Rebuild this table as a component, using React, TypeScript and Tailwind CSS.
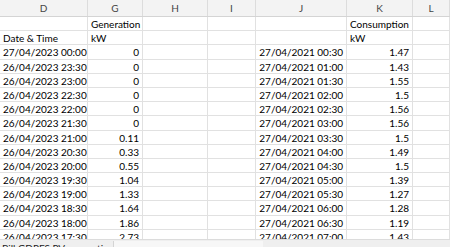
import React from "react";

const cols = ["D", "G", "H", "I", "J", "K", "L"];

const generation: [string, string][] = [
  ["27/04/2023 00:00", "0"],
  ["26/04/2023 23:30", "0"],
  ["26/04/2023 23:00", "0"],
  ["26/04/2023 22:30", "0"],
  ["26/04/2023 22:00", "0"],
  ["26/04/2023 21:30", "0"],
  ["26/04/2023 21:00", "0.11"],
  ["26/04/2023 20:30", "0.33"],
  ["26/04/2023 20:00", "0.55"],
  ["26/04/2023 19:30", "1.04"],
  ["26/04/2023 19:00", "1.33"],
  ["26/04/2023 18:30", "1.64"],
  ["26/04/2023 18:00", "1.86"],
  ["26/04/2023 17:30", "2.73"],
];

const consumption: [string, string][] = [
  ["27/04/2021 00:30", "1.47"],
  ["27/04/2021 01:00", "1.43"],
  ["27/04/2021 01:30", "1.55"],
  ["27/04/2021 02:00", "1.5"],
  ["27/04/2021 02:30", "1.56"],
  ["27/04/2021 03:00", "1.56"],
  ["27/04/2021 03:30", "1.5"],
  ["27/04/2021 04:00", "1.49"],
  ["27/04/2021 04:30", "1.5"],
  ["27/04/2021 05:00", "1.39"],
  ["27/04/2021 05:30", "1.27"],
  ["27/04/2021 06:00", "1.28"],
  ["27/04/2021 06:30", "1.19"],
  ["27/04/2021 07:00", "1.43"],
];

// D, G, H, I, J, K, L
type Row = [string, string, string, string, string, string, string];

const rows: Row[] = [
  ["", "Generation", "", "", "", "Consumption", ""],
  ["Date & Time", "kW", "", "", "", "kW", ""],
  ...generation.map(
    (g, i) => [g[0], g[1], "", "", consumption[i][0], consumption[i][1], ""] as Row
  ),
];

// which cells are right aligned (numbers / real dates)
const alignRight = (r: number, c: number) => r >= 2 && (c === 1 || c === 4 || c === 5);

const gridCols = "grid grid-cols-[88px_55px_65px_48px_91px_66px_1fr]";

function Cell({ text, right }: { text: string; right: boolean }) {
  return (
    <div
      className={`h-[14.2px] border-r border-b border-[#e1e1e1] px-[3px] pt-[1px] leading-[13px] whitespace-nowrap overflow-hidden ${
        right ? "text-right" : "text-left"
      }`}
    >
      {text}
    </div>
  );
}

export default function App() {
  return (
    <div
      className="w-[450px] h-[247px] overflow-hidden bg-white text-black flex flex-col text-[10px]"
      style={{ fontFamily: "Lato, 'Liberation Sans', sans-serif" }}
    >
      <div className="flex-1 overflow-hidden">
        {/* column letters */}
        <div className={`${gridCols} h-[17px] bg-[#f3f3f3] border-b border-[#d4d4d4] text-[#444]`}>
          {cols.map((c) => (
            <div key={c} className="border-r border-[#dcdcdc] text-center leading-[16px]">
              {c}
            </div>
          ))}
        </div>

        <div className={gridCols}>
          {rows.map((row, r) =>
            row.map((text, c) => (
              <Cell key={`${r}-${c}`} text={text} right={alignRight(r, c)} />
            ))
          )}
        </div>
      </div>

      {/* sheet tabs, mostly cut off */}
      <div className="h-[8px] shrink-0 bg-[#efefef] border-t border-[#dcdcdc] flex overflow-hidden">
        <div className="w-[113px] pl-[2px] leading-[14px] pt-[1px] whitespace-nowrap overflow-hidden text-[#222]">
          Bill GDPFS PV generation
        </div>
        <div className="w-[150px] bg-[#f7f7f7] border-l border-[#d4d4d4] mt-[1px]" />
        <div className="flex-1" />
      </div>
    </div>
  );
}
